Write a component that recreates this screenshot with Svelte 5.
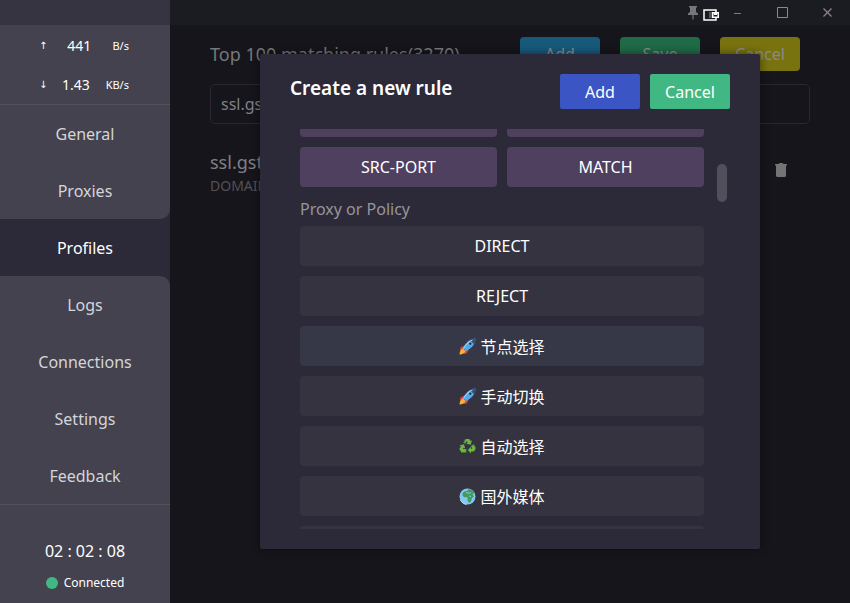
<script lang="ts">
  const pages = ['General', 'Proxies', 'Profiles', 'Logs', 'Connections', 'Settings', 'Feedback'];
  const ruleTypes = ['SRC-PORT', 'MATCH'];
  const policies = [
    { icon: '', name: 'DIRECT' },
    { icon: '', name: 'REJECT' },
    { icon: 'rocket', name: '节点选择' },
    { icon: 'rocket', name: '手动切换' },
    { icon: 'recycle', name: '自动选择' },
    { icon: 'globe', name: '国外媒体' }
  ];

  let activePage = $state('Profiles');
  let hovered = $state('节点选择');
  let keyword = $state('ssl.gstatic.com');

  let activeIndex = $derived(pages.indexOf(activePage));
</script>

<div class="app">
  <aside class="sidebar">
    <div class="drag"></div>
    <div class="traffic">
      <div class="speed"><span class="arrow">↑</span><span>441</span><span class="unit">B/s</span></div>
      <div class="speed"><span class="arrow">↓</span><span>1.43</span><span class="unit">KB/s</span></div>
    </div>
    <nav>
      {#each pages as page, i}
        <button
          class="page"
          class:active={i === activeIndex}
          class:before={i === activeIndex - 1}
          class:after={i === activeIndex + 1}
          onclick={() => (activePage = page)}
        >{page}</button>
      {/each}
    </nav>
    <div class="status">
      <div class="time">02 : 02 : 08</div>
      <div class="connected"><span class="dot"></span>Connected</div>
    </div>
  </aside>

  <main>
    <header class="titlebar">
      <button class="win pin" aria-label="Pin">
        <svg width="10" height="14" viewBox="0 0 10 14"><path d="M1 0h8v1.500H8V6l2 1.500V9H5.600v4L5 14l-.6-1V9H0V7.500L2 6V1.500H1z" fill="#77777a" /></svg>
      </button>
      <button class="win pip" aria-label="Mini window">
        <svg width="17" height="12" viewBox="0 0 17 12">
          <path d="M13 3V1H1v10h12V9" fill="none" stroke="#fff" stroke-width="1.500" />
          <path d="M6 3h4v6H6z" fill="#55565e" />
          <path d="M9.750 3.750h5.500v4.500h-5.500z" fill="#1b1c22" stroke="#fff" stroke-width="1.500" />
          <path d="M11 4h3v2h-3z" fill="#fff" />
        </svg>
      </button>
      <button class="win" aria-label="Minimize">
        <svg width="11" height="11" viewBox="0 0 11 11"><path d="M2 6.500h7" stroke="#7c7c7e" /></svg>
      </button>
      <button class="win" aria-label="Maximize">
        <svg width="11" height="11" viewBox="0 0 11 11"><path d="M.5.5h10v10H.5z" fill="none" stroke="#8a8a8a" /></svg>
      </button>
      <button class="win" aria-label="Close">
        <svg width="11" height="11" viewBox="0 0 11 11"><path d="M1.500 1.500l8 8M9.500 1.500l-8 8" stroke="#8b8389" stroke-width="1.300" /></svg>
      </button>
    </header>

    <div class="content">
      <div class="toolbar">
        <h1>Top 100 matching rules(3270)</h1>
        <button class="tool blue">Add</button>
        <button class="tool green">Save</button>
        <button class="tool yellow">Cancel</button>
      </div>
      <input class="search" type="text" aria-label="Search rules" bind:value={keyword} />
      <div class="rule">
        <div class="rule-text">
          <div class="rule-name">ssl.gstatic.com</div>
          <div class="rule-type">DOMAIN</div>
        </div>
        <button class="delete" aria-label="Delete rule">
          <svg width="12" height="14" viewBox="0 0 12 14"><path d="M0 1h3.500l1-1h3l1 1H12v1.500h-1V12.500q0 1.500-1.500 1.500h-7Q1 14 1 12.500V2.500H0z" fill="#747474" /></svg>
        </button>
      </div>
    </div>

    <div class="overlay">
      <div class="modal" role="dialog" aria-labelledby="modal-title">
        <div class="modal-head">
          <h2 id="modal-title">Create a new rule</h2>
          <button class="action add">Add</button>
          <button class="action cancel">Cancel</button>
        </div>
        <div class="scroller">
          <div class="list">
            <div class="types">
              <div class="type-end"></div>
              <div class="type-end"></div>
              {#each ruleTypes as type}
                <button class="type">{type}</button>
              {/each}
            </div>
            <div class="label">Proxy or Policy</div>
            <div class="policies">
              {#each policies as policy}
                <button
                  class="policy"
                  class:hovered={hovered === policy.name}
                  onmouseenter={() => (hovered = policy.name)}
                >
                  {#if policy.icon === 'rocket'}
                    <svg width="17" height="17" viewBox="0 0 17 17">
                      <path d="M6 7L1.500 9.500.8 12 5 11zM10 11L7.500 15.500 5 16l1-4.500z" fill="#d8434f" />
                      <path d="M4 10.500C1.500 11 .8 13.500.5 16.500 3.500 16.200 6 15.500 6.500 13z" fill="#ffb02e" />
                      <path d="M16.500.5C11 .5 6.500 4.500 4 10.200L6.800 13C12.500 10.500 16.500 6 16.500.5z" fill="#50a9ed" />
                      <path d="M16.500.5c-2.200 0-4 .4-5.800 1.500l4.300 4.300c1.100-1.800 1.500-3.600 1.500-5.800z" fill="#315178" />
                      <path d="M13.500 2C9 4 6.500 7 4.500 10.700" fill="none" stroke="#a6d9f8" />
                      <circle cx="11.300" cy="5.700" r="1.600" fill="#17324d" stroke="#8fc6ec" stroke-width=".6" />
                    </svg>
                  {:else if policy.icon === 'recycle'}
                    <svg width="17" height="17" viewBox="0 0 17 17">
                      <g fill="#70b544">
                        <path d="M4.500 4.500L6.500 1h3.800l1.200 2 1.500-.8-1.300 4.500-4.500-1 1.500-.9-1-1.700-1.400 2.500z" />
                        <path d="M12 8l2.800-1.700L16.800 10 15 13.500h-3v2L8.800 12 12 8.800v2h1.300z" />
                        <path d="M7.200 11v3.500H2.500L.3 11l1.600-2.600L.5 7.500 5 6.300l1.200 4.300-1.500-.9-.8 1.300z" />
                      </g>
                      <path d="M6.500 1L4.500 4.500l2.300 1.300M16.800 10L14.800 6.300 12 8M2.500 14.500h4.700V11" fill="none" stroke="#35732e" stroke-width=".8" />
                    </svg>
                  {:else if policy.icon === 'globe'}
                    <svg width="17" height="17" viewBox="0 0 17 17">
                      <circle cx="8.500" cy="8.500" r="8" fill="#83c8ee" />
                      <path d="M3.500 5.500L5 3.500l3-.6 2-1.800c2.600.5 4.600 1.900 5.600 4L13.500 6l1.500 2.500-2 1.500-1 3.500-2 1.500-1.500-2.500.3-2.500L7.500 9 5 9.200 3.500 7.500z" fill="#459a57" />
                      <path d="M7 4.500l3 .8 2-.8M10 8l2 .5" fill="none" stroke="#83c8ee" />
                      <path d="M1.500 12c1 2 3 4 6 4.500" fill="none" stroke="#c4e8f7" />
                    </svg>
                  {/if}
                  <span>{policy.name}</span>
                </button>
              {/each}
              <div class="policy-start"></div>
            </div>
          </div>
          <div class="track"><div class="thumb"></div></div>
        </div>
      </div>
    </div>
  </main>
</div>

<style>
  :global(body) {
    margin: 0;
    background: #16151b;
  }

  .app {
    display: flex;
    min-height: 100vh;
    font-family: 'Noto Sans', 'Noto Sans CJK SC', sans-serif;
    color: #fff;
  }

  button,
  input {
    font-family: inherit;
    box-sizing: border-box;
  }

  button {
    border: none;
    padding: 0;
    color: inherit;
    background: none;
    cursor: pointer;
  }

  h1,
  h2 {
    margin: 0;
    flex: 1;
    white-space: nowrap;
  }

  .sidebar {
    width: 170px;
    flex-shrink: 0;
    display: flex;
    flex-direction: column;
    background: #2c2a38;
  }

  .drag {
    height: 25px;
    background: #353440;
  }

  .traffic {
    background: #43424e;
    border-bottom: 1px solid #53525d;
  }

  .speed {
    display: flex;
    justify-content: space-between;
    align-items: center;
    height: 40px;
    padding: 0 41px 0 39px;
    font-size: 14px;
  }

  .traffic .speed:last-child {
    height: 39px;
  }

  .arrow {
    width: 7px;
    font-family: 'DejaVu Sans', sans-serif;
    font-size: 10px;
  }

  .unit {
    font-size: 11px;
  }

  nav {
    display: flex;
    flex-direction: column;
  }

  .page {
    height: 57px;
    background: #43424e;
    color: #d5d5d8;
    font-size: 16px;
  }

  .page.active {
    background: #2c2a38;
    color: #fff;
  }

  .page.before {
    border-bottom-right-radius: 10px;
  }

  .page.after {
    border-top-right-radius: 10px;
  }

  .status {
    flex: 1;
    display: flex;
    flex-direction: column;
    align-items: center;
    justify-content: flex-end;
    gap: 12px;
    padding-bottom: 10px;
    background: #43424e;
    border-top: 1px solid #53525d;
  }

  .time {
    font-size: 16px;
    line-height: 20px;
  }

  .connected {
    display: flex;
    align-items: center;
    gap: 6px;
    font-size: 12px;
    line-height: 20px;
  }

  .dot {
    width: 12px;
    height: 12px;
    border-radius: 50%;
    background: #41b883;
  }

  main {
    flex: 1;
    min-width: 0;
    position: relative;
    background: #16151b;
  }

  .titlebar {
    display: flex;
    justify-content: flex-end;
    height: 25px;
    background: #1b1c21;
  }

  .win {
    display: flex;
    align-items: center;
    justify-content: center;
    width: 45px;
  }

  .win.pin {
    width: 10px;
    margin-right: 5px;
  }

  .win.pip {
    width: 17px;
    padding-top: 4px;
    margin-right: -5px;
  }

  .content {
    padding: 12px 40px;
  }

  .toolbar {
    display: flex;
    align-items: center;
    gap: 20px;
    padding-right: 10px;
  }

  h1 {
    color: #77777a;
    font-size: 18px;
    font-weight: 400;
  }

  .tool {
    width: 80px;
    height: 34px;
    border-radius: 4px;
    font-size: 16px;
    color: #8a8a8a;
  }

  .tool.blue {
    background: #17597a;
  }

  .tool.green {
    background: #1f6a47;
  }

  .tool.yellow {
    background: #78720f;
  }

  .search {
    display: block;
    width: 100%;
    height: 40px;
    margin-top: 13px;
    padding: 0 10px;
    border: 1px solid #29282e;
    border-radius: 5px;
    outline: none;
    background: transparent;
    color: #808083;
    font-size: 16px;
  }

  .rule {
    display: flex;
    align-items: flex-start;
    padding: 26px 23px 0 0;
  }

  .rule-text {
    flex: 1;
  }

  .rule-name {
    color: #808083;
    font-size: 18px;
    line-height: 24px;
  }

  .rule-type {
    color: #525156;
    font-size: 14px;
    line-height: 24px;
  }

  .delete {
    display: flex;
    padding-top: 13px;
  }

  .overlay {
    position: absolute;
    inset: 0;
    display: flex;
    align-items: center;
    justify-content: center;
    pointer-events: none;
  }

  .modal {
    box-sizing: border-box;
    width: 500px;
    max-width: 100%;
    padding: 20px 30px;
    border-radius: 2px;
    background: #2c2a38;
    box-shadow: 0 0 8px rgba(0, 0, 0, 0.5);
    pointer-events: auto;
  }

  .modal-head {
    display: flex;
    gap: 10px;
    margin-bottom: 20px;
  }

  h2 {
    font-size: 19px;
    font-weight: 600;
    line-height: 28px;
  }

  .action {
    width: 80px;
    height: 35px;
    border-radius: 2px;
    font-size: 16px;
  }

  .action.add {
    background: #3b55c4;
  }

  .action.cancel {
    background: #41b883;
  }

  .scroller {
    display: flex;
    height: 400px;
    overflow: hidden;
  }

  .list {
    flex: 1;
    padding-left: 10px;
  }

  .types {
    display: grid;
    grid-template-columns: 1fr 1fr;
    gap: 10px;
  }

  .type-end {
    height: 8px;
    border-radius: 0 0 4px 4px;
    background: #4f4060;
  }

  .type {
    height: 40px;
    border-radius: 4px;
    background: #4f4060;
    font-size: 16px;
  }

  .label {
    padding-top: 5px;
    color: #96959b;
    font-size: 16px;
    line-height: 34px;
  }

  .policies {
    display: flex;
    flex-direction: column;
    gap: 10px;
  }

  .policy {
    display: flex;
    align-items: center;
    justify-content: center;
    gap: 4px;
    height: 40px;
    border-radius: 4px;
    background: #353340;
    font-size: 16px;
  }

  .policy.hovered {
    background: #363747;
  }

  .policy-start {
    height: 3px;
    border-radius: 4px 4px 0 0;
    background: #353340;
  }

  .track {
    padding: 35px 3px 0 13px;
  }

  .thumb {
    width: 10px;
    height: 38px;
    border-radius: 5px;
    background: #514f5b;
  }
</style>
